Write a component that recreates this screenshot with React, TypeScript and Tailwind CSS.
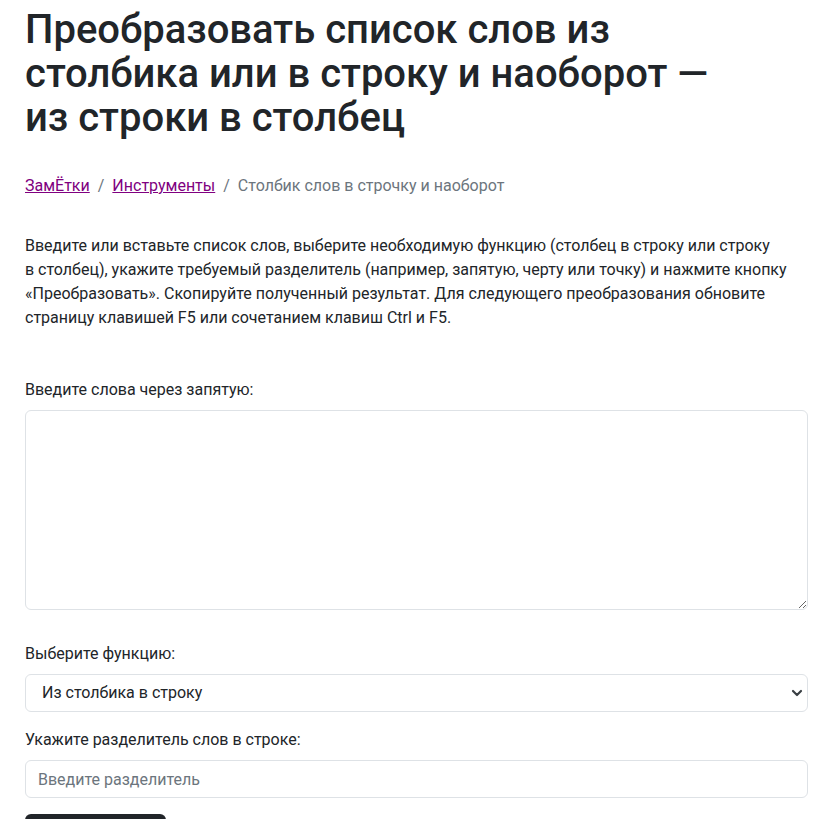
import { useState } from "react";

const FUNCTIONS = ["Из столбика в строку", "Из строки в столбик"];

export default function App() {
  const [words, setWords] = useState("");
  const [mode, setMode] = useState(FUNCTIONS[0]);
  const [separator, setSeparator] = useState("");

  return (
    <div className="min-h-screen bg-white font-['Roboto','Liberation_Sans',sans-serif] text-[#212529]">
      <div className="pl-[25px] pr-[22px] pt-[8px] pb-10">
        <h1 className="max-w-[710px] text-[40px] font-medium leading-[44px] text-[#212529]">
          Преобразовать список слов из столбика или в строку и наоборот — из строки в столбец
        </h1>

        {/* хлебные крошки */}
        <nav className="mt-[34px] flex items-center text-base leading-6">
          <a href="#" className="text-[#800080] underline">ЗамЁтки</a>
          <span className="px-2 text-[#6c757d]">/</span>
          <a href="#" className="text-[#800080] underline">Инструменты</a>
          <span className="px-2 text-[#6c757d]">/</span>
          <span className="text-[#6c757d]">Столбик слов в строчку и наоборот</span>
        </nav>

        <p className="mt-[36px] text-base leading-6">
          Введите или вставьте список слов, выберите необходимую функцию (столбец в строку или строку
          в&nbsp;столбец), укажите требуемый разделитель (например, запятую, черту или точку) и нажмите кнопку
          «Преобразовать». Скопируйте полученный результат. Для следующего преобразования обновите
          страницу клавишей F5 или сочетанием клавиш Ctrl и F5.
        </p>

        <form className="mt-[48px]" onSubmit={(e) => e.preventDefault()}>
          <label className="mb-2 block text-base leading-6">Введите слова через запятую:</label>
          <textarea
            value={words}
            onChange={(e) => setWords(e.target.value)}
            className="block h-[200px] w-full rounded-[6px] border border-[#dee2e6] px-3 py-[6px] text-base outline-none"
          />

          <label className="mt-8 mb-2 block text-base leading-6">Выберите функцию:</label>
          <div className="relative">
            <select
              value={mode}
              onChange={(e) => setMode(e.target.value)}
              className="block h-[38px] w-full appearance-none rounded-[6px] border border-[#dee2e6] bg-white pl-4 pr-8 text-base text-[#212529] outline-none"
            >
              {FUNCTIONS.map((f) => (
                <option key={f}>{f}</option>
              ))}
            </select>
            <svg
              className="pointer-events-none absolute right-[5px] top-1/2 -translate-y-1/2"
              width="12"
              height="8"
              viewBox="0 0 12 8"
            >
              <path d="M2 2l4 4 4-4" fill="none" stroke="#3a3f44" strokeWidth="2.2" strokeLinecap="round" strokeLinejoin="round" />
            </svg>
          </div>

          <label className="mt-4 mb-2 block text-base leading-6">Укажите разделитель слов в строке:</label>
          <input
            value={separator}
            onChange={(e) => setSeparator(e.target.value)}
            placeholder="Введите разделитель"
            className="block h-[38px] w-full rounded-[6px] border border-[#dee2e6] px-3 text-base outline-none placeholder:text-[#6c757d]"
          />

          <button
            type="submit"
            className="mt-4 h-[38px] w-[141px] rounded-[6px] bg-[#212529] text-base text-white"
          >
            Преобразовать
          </button>
        </form>
      </div>
    </div>
  );
}
